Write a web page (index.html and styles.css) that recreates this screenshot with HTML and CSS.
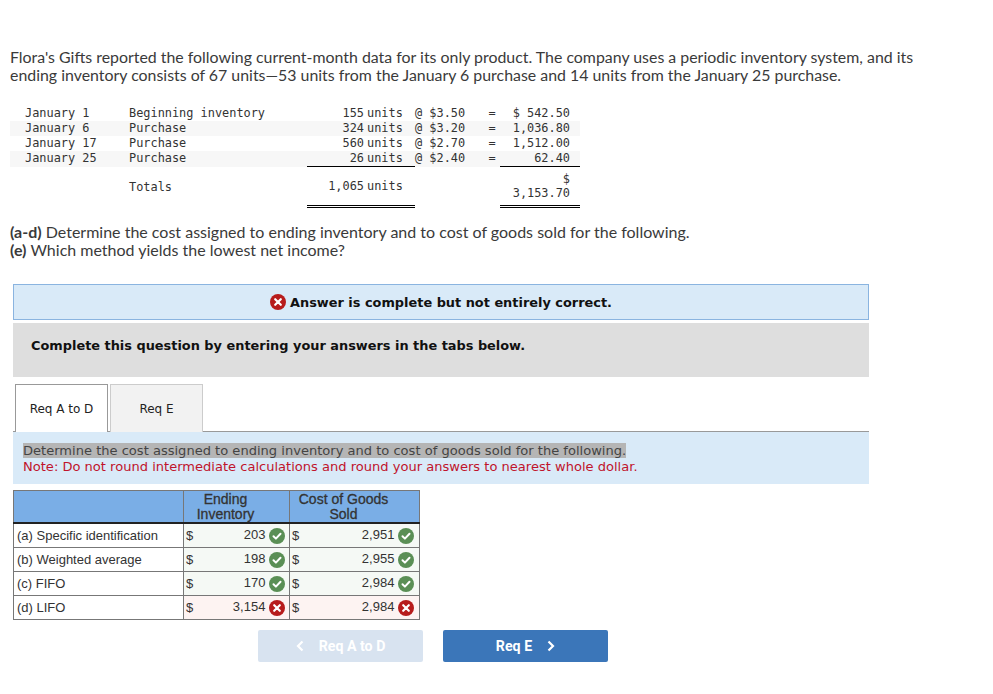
FILE: index.html
```html
<!DOCTYPE html>
<html lang="en">
<head>
    <meta charset="UTF-8">
    <title>Flora's Gifts</title>
    <link rel="stylesheet" href="styles.css">
</head>
<body>
    <p class="intro">Flora's Gifts reported the following current-month data for its only product. The company uses a periodic inventory system, and its ending inventory consists of 67 units—53 units from the January 6 purchase and 14 units from the January 25 purchase.</p>

    <table class="data">
        <colgroup>
            <col class="c-date"><col class="c-desc"><col class="c-num"><col class="c-unit"><col class="c-price"><col class="c-eq"><col class="c-amt">
        </colgroup>
        <tr><td class="date">January 1</td><td>Beginning inventory</td><td class="r">155</td><td>units</td><td>@ $3.50</td><td class="eq">=</td><td class="r amt">$ 542.50</td></tr>
        <tr class="alt"><td class="date">January 6</td><td>Purchase</td><td class="r">324</td><td>units</td><td>@ $3.20</td><td class="eq">=</td><td class="r amt">1,036.80</td></tr>
        <tr><td class="date">January 17</td><td>Purchase</td><td class="r">560</td><td>units</td><td>@ $2.70</td><td class="eq">=</td><td class="r amt">1,512.00</td></tr>
        <tr class="alt last"><td class="date">January 25</td><td>Purchase</td><td class="r line">26</td><td class="line">units</td><td>@ $2.40</td><td class="eq">=</td><td class="r amt line">62.40</td></tr>
        <tr class="totals"><td></td><td>Totals</td><td class="r dbl">1,065</td><td class="dbl">units</td><td></td><td></td><td class="r amt dbl">$<br>3,153.70</td></tr>
    </table>

    <p class="ask"><b>(a-d)</b> Determine the cost assigned to ending inventory and to cost of goods sold for the following.<br><b>(e)</b> Which method yields the lowest net income?</p>

    <div class="banner">
        <svg class="mark" viewBox="0 0 16 16"><circle cx="8" cy="8" r="8" fill="#b71c1c"/><path d="M5.2 5.2l5.6 5.6M10.8 5.2l-5.6 5.6" stroke="#fff" stroke-width="2.2" stroke-linecap="round"/></svg>
        <b>Answer is complete but not entirely correct.</b>
    </div>
    <div class="prompt"><b>Complete this question by entering your answers in the tabs below.</b></div>

    <div class="tabs">
        <div class="tab active">Req A to D</div>
        <div class="tab">Req E</div>
    </div>
    <div class="note">
        <span class="hl">Determine the cost assigned to ending inventory and to cost of goods sold for the following.</span><br>
        <span class="red">Note: Do not round intermediate calculations and round your answers to nearest whole dollar.</span>
    </div>

    <table class="answers">
        <colgroup><col class="a-label"><col class="a-cur"><col class="a-val"><col class="a-cur2"><col class="a-val2"></colgroup>
        <tr class="head"><th></th><th colspan="2">Ending<br>Inventory</th><th colspan="2">Cost of Goods<br>Sold</th></tr>
        <tr>
            <td>(a) Specific identification</td><td class="ok">$</td>
            <td class="ok num">203 <svg class="mark" viewBox="0 0 16 16"><circle cx="8" cy="8" r="8" fill="#5a8f55"/><path d="M4.5 8.3l2.4 2.3 4.6-4.8" fill="none" stroke="#fff" stroke-width="2" stroke-linecap="round" stroke-linejoin="round"/></svg></td>
            <td class="ok">$</td>
            <td class="ok num">2,951 <svg class="mark" viewBox="0 0 16 16"><circle cx="8" cy="8" r="8" fill="#5a8f55"/><path d="M4.5 8.3l2.4 2.3 4.6-4.8" fill="none" stroke="#fff" stroke-width="2" stroke-linecap="round" stroke-linejoin="round"/></svg></td>
        </tr>
        <tr>
            <td>(b) Weighted average</td><td class="ok">$</td>
            <td class="ok num">198 <svg class="mark" viewBox="0 0 16 16"><circle cx="8" cy="8" r="8" fill="#5a8f55"/><path d="M4.5 8.3l2.4 2.3 4.6-4.8" fill="none" stroke="#fff" stroke-width="2" stroke-linecap="round" stroke-linejoin="round"/></svg></td>
            <td class="ok">$</td>
            <td class="ok num">2,955 <svg class="mark" viewBox="0 0 16 16"><circle cx="8" cy="8" r="8" fill="#5a8f55"/><path d="M4.5 8.3l2.4 2.3 4.6-4.8" fill="none" stroke="#fff" stroke-width="2" stroke-linecap="round" stroke-linejoin="round"/></svg></td>
        </tr>
        <tr>
            <td>(c) FIFO</td><td class="ok">$</td>
            <td class="ok num">170 <svg class="mark" viewBox="0 0 16 16"><circle cx="8" cy="8" r="8" fill="#5a8f55"/><path d="M4.5 8.3l2.4 2.3 4.6-4.8" fill="none" stroke="#fff" stroke-width="2" stroke-linecap="round" stroke-linejoin="round"/></svg></td>
            <td class="ok">$</td>
            <td class="ok num">2,984 <svg class="mark" viewBox="0 0 16 16"><circle cx="8" cy="8" r="8" fill="#5a8f55"/><path d="M4.5 8.3l2.4 2.3 4.6-4.8" fill="none" stroke="#fff" stroke-width="2" stroke-linecap="round" stroke-linejoin="round"/></svg></td>
        </tr>
        <tr>
            <td>(d) LIFO</td><td class="bad">$</td>
            <td class="bad num">3,154 <svg class="mark" viewBox="0 0 16 16"><circle cx="8" cy="8" r="8" fill="#b71c1c"/><path d="M5.2 5.2l5.6 5.6M10.8 5.2l-5.6 5.6" stroke="#fff" stroke-width="2.2" stroke-linecap="round"/></svg></td>
            <td class="bad">$</td>
            <td class="bad num">2,984 <svg class="mark" viewBox="0 0 16 16"><circle cx="8" cy="8" r="8" fill="#b71c1c"/><path d="M5.2 5.2l5.6 5.6M10.8 5.2l-5.6 5.6" stroke="#fff" stroke-width="2.2" stroke-linecap="round"/></svg></td>
        </tr>
    </table>

    <div class="nav">
        <div class="btn off"><svg class="chev" viewBox="0 0 8 12"><path d="M6.5 1.5L2 6l4.5 4.5" fill="none" stroke="currentColor" stroke-width="2.2"/></svg>Req A to D</div>
        <div class="btn on">Req E<svg class="chev" viewBox="0 0 8 12"><path d="M1.5 1.5L6 6l-4.5 4.5" fill="none" stroke="currentColor" stroke-width="2.2"/></svg></div>
    </div>
</body>
</html>
```

FILE: styles.css
```css
body {
    margin: 0;
    padding: 48px 0 0;
    font-family: "Lato", "Liberation Sans", sans-serif;
    color: #3a3a3a;
    background: #fff;
}

.intro {
    margin: 0 0 22px 10px;
    width: 920px;
    font-size: 15.9px;
    line-height: 18px;
}

.data {
    margin-left: 10px;
    width: 570px;
    table-layout: fixed;
    border-collapse: collapse;
    font-family: "DejaVu Sans Mono", monospace;
    font-size: 11.9px;
    color: #333;
}

.c-date { width: 119px; }
.c-desc { width: 178px; }
.c-num { width: 57px; }
.c-unit { width: 51px; }
.c-price { width: 69px; }
.c-eq { width: 16px; }
.c-amt { width: 80px; }

.data td {
    height: 15px;
    padding: 0;
    line-height: 15px;
    vertical-align: top;
    white-space: nowrap;
}

.data .date { padding-left: 15px; }
.data .r { text-align: right; }
.data .amt { padding-right: 10px; }
.data .eq { text-align: center; }
.data td:nth-child(4) { padding-left: 3px; }
.alt { background: #f7f7f7; }

.data .line { border-bottom: 1px solid #000; }
.data .dbl { border-bottom: 3px double #000; }
.data .totals td { height: 38px; line-height: 14px; vertical-align: middle; }

.ask {
    margin: 15px 0 25px 10px;
    font-size: 16px;
    line-height: 18px;
}

.banner {
    margin-left: 13px;
    width: 854px;
    height: 34px;
    display: flex;
    align-items: center;
    justify-content: center;
    gap: 4px;
    background: #d9eaf8;
    border: 1px solid #8ab4e0;
    font-family: "DejaVu Sans", sans-serif;
    font-size: 12.9px;
    color: #111;
}

.mark {
    width: 16px;
    height: 16px;
    vertical-align: middle;
    flex: none;
}

.prompt {
    margin: 3px 0 7px 13px;
    width: 838px;
    height: 39px;
    padding: 15px 0 0 18px;
    background: #dedede;
    font-family: "DejaVu Sans", sans-serif;
    font-size: 12.9px;
    color: #111;
}

.tabs {
    margin-left: 13px;
    width: 856px;
    display: flex;
    gap: 2px;
    padding-left: 2px;
    box-sizing: border-box;
    border-bottom: 1px solid #999;
}

.tab {
    width: 91px;
    height: 47px;
    margin-bottom: -1px;
    display: flex;
    align-items: center;
    justify-content: center;
    background: #f2f2f2;
    border: 1px solid #ccc;
    border-bottom: 0;
    font-family: "DejaVu Sans", sans-serif;
    font-size: 12px;
    color: #222;
}

.tab.active {
    background: #fff;
    border-color: #999;
}

.note {
    margin-left: 13px;
    width: 846px;
    height: 41px;
    padding: 11px 0 0 10px;
    background: #d9eaf8;
    font-family: "DejaVu Sans", sans-serif;
    font-size: 13.05px;
    line-height: 16px;
    color: #444;
}

.hl { background: #b5b5b5; }
.red { color: #c0142c; }

.answers {
    margin: 6px 0 0 13px;
    width: 406px;
    table-layout: fixed;
    border-collapse: collapse;
    font-family: "Liberation Sans", Arial, sans-serif;
    font-size: 13px;
    line-height: 16px;
    color: #333;
}

.a-label { width: 170px; }
.a-cur { width: 20px; }
.a-val { width: 86px; }
.a-cur2 { width: 20px; }
.a-val2 { width: 110px; }

.answers td,
.answers th {
    border: 1px solid #777;
    padding: 0 3px;
    height: 23px;
    white-space: nowrap;
}

.answers th {
    height: 31px;
    padding-right: 25px;
    background: #7aaee6;
    font-size: 14px;
    font-weight: normal;
    -webkit-text-stroke: 0.3px #333;
    line-height: 15px;
    border-bottom: 2px solid #222;
}

.answers td:nth-child(even) { border-right: 0; padding-left: 2px; }
.answers td.num { border-left: 0; text-align: right; padding-right: 4px; }
.answers td.num:last-child { padding-right: 5px; }
.ok { background: #f5f9f5; }
.bad { background: #fdf3f2; }

.nav {
    margin: 10px 0 0 258px;
    display: flex;
    gap: 20px;
}

.btn {
    width: 165px;
    height: 32px;
    display: flex;
    align-items: center;
    justify-content: center;
    gap: 15px;
    border-radius: 2px;
    color: #fff;
    font-family: "Roboto", sans-serif;
    font-size: 14.2px;
    font-weight: 700;
}

.btn.off { background: #d8e3f0; }
.btn.on { background: #3b76b9; }
.chev { width: 8px; height: 12px; }
```
